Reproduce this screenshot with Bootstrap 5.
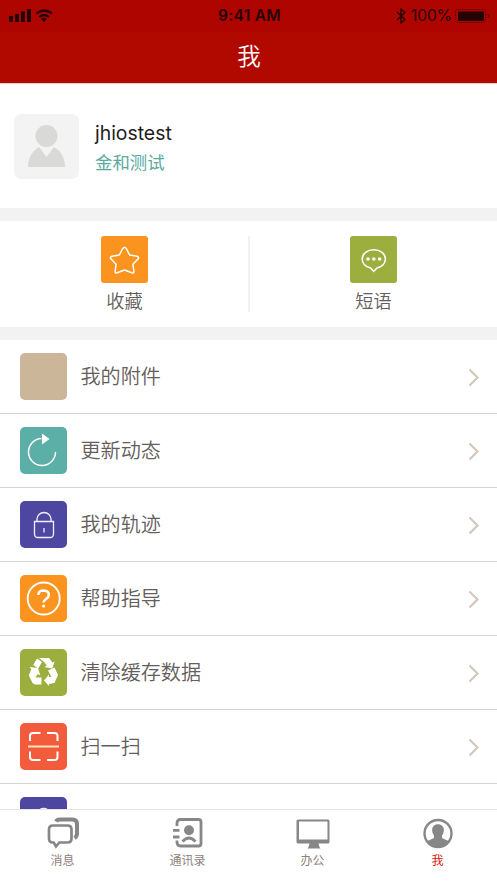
<!DOCTYPE html>
<html lang="zh-CN">
<head>
<meta charset="utf-8">
<meta name="viewport" content="width=device-width, initial-scale=1">
<title>我</title>
<link href="https://cdn.jsdelivr.net/npm/bootstrap@5.3.0/dist/css/bootstrap.min.css" rel="stylesheet">
<style>
  body { font-family: Inter, "Noto Sans CJK SC", sans-serif; color: #645d5b; background: #fff; }
  svg { display: block; flex: none; }
  .screen { height: 883px; }
  .top-bar { height: 83px; background: #b10800; color: #fff; box-shadow: 0 1px 0 #e2d0cd; }
  .status { height: 32px; background: #ae0500; color: #250303; font-size: 16px; line-height: 32px; padding: 0 7px 0 9px; }
  .status > div { flex: 1 1 0; }
  .clock { font-weight: 600; font-size: 15.5px; letter-spacing: .3px; }
  .charge { font-size: 15.5px; margin: 0 3px 0 4px; }
  .page-title { font-size: 23.5px; line-height: 49px; font-weight: 350; padding-left: 1px; }
  .profile { height: 125px; padding: 2px 0 0 14px; }
  .avatar { width: 65px; height: 65px; border-radius: 7px; background: #f3f3f3; }
  .user-info { padding-top: 4px; }
  .user-name { font-size: 19.4px; line-height: 28px; color: #221b1b; }
  .user-org { font-size: 17.4px; line-height: 31px; color: #58aaa0; }
  .band { height: 13px; background: #f2f2f2; }
  .shortcuts { height: 106px; padding: 15px 0 0 1px; }
  .shortcut-name { font-size: 18.2px; line-height: 36px; font-weight: 350; }
  .divider-v { width: 2px; height: 76px; background: #f1f1f1; flex: none; }
  .tile { width: 47px; height: 47px; border-radius: 5px; flex: none; }
  .shortcuts .tile { border-radius: 3px; }
  .orange { background: #fb931f; } .green { background: #9bae3e; } .tan { background: #ccb69a; }
  .teal { background: #5bafa7; } .violet { background: #4e47a2; } .red { background: #f25b3b; }
  .menu-item { height: 74px; padding: 0 17px 0 20px; border-bottom: 1px solid #d5d5d5; font-size: 20.1px; font-weight: 350; flex: none; }
  .menu-item .label { margin-left: 13.5px; padding-top: 2px; }
  .tab-bar { height: 74px; border-top: 1px solid #e6e6e6; background: #fff; font-size: 12px; color: #8c7f7a; flex: none; }
  .tab-bar .tab { padding-top: 7px; width: 125px; flex: none; }
  .tab-bar .tab span { line-height: 22px; }
  .tab-bar .current { color: #d61a08; }
</style>
<script src="https://cdn.jsdelivr.net/npm/bootstrap@5.3.0/dist/js/bootstrap.bundle.min.js"></script>
</head>
<body>
<svg width="0" height="0" class="position-absolute"><defs>
  <symbol id="chevron" viewBox="0 0 12 20"><path d="M1.500 2.500 9.500 10.500 1.500 18.500" fill="none" stroke="#d3c8bb" stroke-width="2.200"/></symbol>
</defs></svg>
<div class="screen d-flex flex-column overflow-hidden">
  <header class="top-bar flex-shrink-0">
    <div class="status d-flex align-items-center">
      <div class="d-flex align-items-center">
        <svg width="46" height="18" viewBox="0 0 46 18" fill="#250303"><path d="M0 9h4v6H0zM6 7h4v8H6zM12 4.500h4V15h-4zM18 2h4v13h-4z"/><g fill="none" stroke="#250303" stroke-width="2.200"><path d="M27.500 6.500Q35 .5 43 6.500M30.500 10Q35 6 40 10"/></g><path d="M32 12q3-2.500 6 0l-3 3z"/></svg>
      </div>
      <span class="clock">9:41 AM</span>
      <div class="d-flex align-items-center justify-content-end">
        <svg width="11" height="18" viewBox="0 0 11 18" fill="none" stroke="#250303" stroke-width="1.400"><path d="M1 5l8 7.500-4 3.500V2l4 3.500L1 13"/></svg>
        <span class="charge">100%</span>
        <svg width="35" height="15" viewBox="0 0 35 15"><rect x=".5" y=".5" width="30" height="13" rx="2" fill="none" stroke="#250303" stroke-dasharray="1 1" stroke-opacity=".65"/><path d="M3 2.500h26v9.500H3z" fill="#250303"/><path d="M32.500 5l2 2-2 2" fill="none" stroke="#250303"/></svg>
      </div>
    </div>
    <div class="page-title text-center">我</div>
  </header>

  <section class="profile d-flex align-items-center flex-shrink-0">
    <div class="avatar"><svg width="65" height="65" viewBox="0 0 65 65" fill="#d9d9d8"><circle cx="32.500" cy="22" r="11"/><path d="M14 53c0-8 3-15 11-20l7.500 10L40 33c7 4 11 11 11 20z"/></svg></div>
    <div class="ms-3 user-info"><div class="user-name">jhiostest</div><div class="user-org">金和测试</div></div>
  </section>
  <div class="band flex-shrink-0"></div>

  <section class="shortcuts d-flex flex-shrink-0">
    <div class="flex-fill w-50 d-flex flex-column align-items-center">
      <div class="tile orange"><svg width="47" height="47" viewBox="0 0 47 47" fill="none" stroke="#fff" stroke-width="1.500" stroke-linejoin="round"><path d="M21.700 12.700q1.800-3 3.600 0l3.400 6.300 7.300 1.300q2.600.8.900 2.700l-5 5.200 1 7.300q0 2-2 1.300L23.500 34l-7.400 2.800q-2 .7-2-1.300l1-7.300-5-5.200q-1.700-1.900.9-2.700l7.300-1.300z"/></svg></div>
      <div class="shortcut-name">收藏</div>
    </div>
    <div class="divider-v"></div>
    <div class="flex-fill w-50 d-flex flex-column align-items-center">
      <div class="tile green"><svg width="47" height="47" viewBox="0 0 47 47"><path d="M20.500 32c-5-1.200-8.300-4.800-8.300-9 0-5.300 5.200-9.200 11.600-9.200S35.400 17.700 35.400 23c0 4.200-3.400 7.800-8.400 9l-3.200 3.300z" fill="none" stroke="#fff" stroke-width="1.600"/><g fill="#fff"><circle cx="18" cy="23" r="1.800"/><circle cx="23.800" cy="23" r="1.800"/><circle cx="29.600" cy="23" r="1.800"/></g></svg></div>
      <div class="shortcut-name">短语</div>
    </div>
  </section>
  <div class="band flex-shrink-0"></div>

  <main class="flex-fill overflow-hidden d-flex flex-column">
    <div class="menu-item d-flex align-items-center">
      <div class="tile tan"><svg width="47" height="47" viewBox="0 0 47 47" fill="#f0ae70"><path d="M18 5h1v1h-1zM28 7h1v1h-1zM34 7h1v1h-1zM21 11h1v1h-1zM28 17h1v1h-1zM40 15h1v1h-1zM16 21h1v1h-1zM34 21h1v1h-1zM22 25h1v1h-1zM12 31h1v1h-1zM28 30h1v1h-1zM18 35h1v1h-1zM36 32h1v1h-1zM6 40h1v1H6zM22 40h1v1h-1zM32 39h1v1h-1z"/></svg></div>
      <span class="label flex-fill">我的附件</span><svg width="12" height="20"><use href="#chevron"/></svg>
    </div>
    <div class="menu-item d-flex align-items-center">
      <div class="tile teal"><svg width="47" height="47" viewBox="0 0 47 47"><path d="M21.500 11.500A13.500 13.500 0 1 0 35.500 25" fill="none" stroke="#fff" stroke-width="1.500"/><path d="M22 6.500v11l7.500-5.500z" fill="#fff"/></svg></div>
      <span class="label flex-fill">更新动态</span><svg width="12" height="20"><use href="#chevron"/></svg>
    </div>
    <div class="menu-item d-flex align-items-center">
      <div class="tile violet"><svg width="47" height="47" viewBox="0 0 47 47" fill="none" stroke="#f1efff" stroke-width="1.300"><path d="M14.500 20.500h19V33q0 3.500-3.500 3.500H18q-3.500 0-3.500-3.500zM17 20.500v-2.500a7 6.500 0 0 1 14 0v2.500M24 27v4.500"/></svg></div>
      <span class="label flex-fill">我的轨迹</span><svg width="12" height="20"><use href="#chevron"/></svg>
    </div>
    <div class="menu-item d-flex align-items-center">
      <div class="tile orange"><svg width="47" height="47" viewBox="0 0 47 47"><circle cx="23.700" cy="23.500" r="16" fill="none" stroke="#fff" stroke-width="1.900"/><path d="M18.300 20q.2-4.500 5.300-4.500 5.200.2 5.200 4.500c0 4-5.200 4-5.200 7.500" fill="none" stroke="#fff" stroke-width="2.600"/><circle cx="23.600" cy="31" r="1.600" fill="#fff"/></svg></div>
      <span class="label flex-fill">帮助指导</span><svg width="12" height="20"><use href="#chevron"/></svg>
    </div>
    <div class="menu-item d-flex align-items-center">
      <div class="tile green"><svg width="47" height="47" viewBox="0 0 47 47" fill="#fff"><path d="M19 9h10l3.500 4.500 2.200-1-2.500 7-8-1.500 2.700-1.200-3-4zM17 9.500l5 3.500-3.800 6.500-5-3.500zM9.500 18l8.500 1 2.300 7.500-2.500-1.500-2.300 3.500h6v7h-6.500l-2.500-1.500-3.700-7.500 2.500-6.500zM34.500 18.500l3.500 7.500-3.500 8-5.500 1v2l-5-5.500 5-6v2.500h2.500l-3.500-6.500z"/></svg></div>
      <span class="label flex-fill">清除缓存数据</span><svg width="12" height="20"><use href="#chevron"/></svg>
    </div>
    <div class="menu-item d-flex align-items-center">
      <div class="tile red"><svg width="47" height="47" viewBox="0 0 47 47" fill="none" stroke="#fff" stroke-width="2"><path d="M10 18v-5q0-3 3-3h7.500M27 10h7.500q3 0 3 3v5M10 28.500v5.500q0 3 3 3h7.500M27 37h7.500q3 0 3-3v-5.500"/><path d="M8 23.500h31" stroke="#ffe2c0"/></svg></div>
      <span class="label flex-fill">扫一扫</span><svg width="12" height="20"><use href="#chevron"/></svg>
    </div>
    <div class="menu-item d-flex align-items-center">
      <div class="tile violet"><svg width="47" height="47" viewBox="0 0 47 47" fill="none" stroke="#f1efff" stroke-width="1.500"><circle cx="23.700" cy="18" r="6.500"/></svg></div>
    </div>
  </main>

  <nav class="tab-bar d-flex overflow-hidden">
    <div class="tab d-flex flex-column align-items-center">
      <svg width="34" height="33" viewBox="0 0 34 33"><path d="M10 4.500q1-2 4-2h12.500q4.500 0 4.500 4.500v9.500q0 3-2.500 4.500" fill="none" stroke="#878787" stroke-width="4"/><path d="M7 8.500h14.500q4 0 4 4v9q0 4-4 4h-8.200l-3.300 4-2.300-4H7q-4 0-4-4v-9q0-4 4-4z" fill="#fff" stroke="#878787" stroke-width="2.700"/></svg>
      <span>消息</span>
    </div>
    <div class="tab d-flex flex-column align-items-center">
      <svg width="32" height="33" viewBox="0 0 32 33" fill="none" stroke="#878787" stroke-width="2.800"><path d="M5 9V6q0-3.500 3.500-3.500h18q2.500 0 2.500 2.500v21.500q0 2.500-2.500 2.500H8.500Q5 29 5 25v-1.500M1 13.300h6.500M1 20h6.500"/><circle cx="17" cy="13.300" r="5" fill="#878787" stroke="none"/><path d="M10.500 24.500q6.500-7 13 0"/></svg>
      <span>通讯录</span>
    </div>
    <div class="tab d-flex flex-column align-items-center">
      <svg width="34" height="33" viewBox="0 0 34 33" fill="#878787"><path fill-rule="evenodd" d="M2 2.500h30q1.500 0 1.500 1.500v21q0 1.500-1.500 1.500H22.500l1 3.500 1 1.500H11.500l1-1.500 1-3.500H2Q.5 26.500.5 25V4q0-1.500 1.500-1.500zM3 4.500v18h28.500v-18z"/></svg>
      <span>办公</span>
    </div>
    <div class="tab d-flex flex-column align-items-center current">
      <svg width="32" height="33" viewBox="0 0 32 33"><circle cx="16" cy="16.500" r="13.500" fill="none" stroke="#878787" stroke-width="2.400"/><path d="M4.500 24.500l7.500-3.500v-2.500c-1.500-2-2-4-1.800-6.500.5-6.500 11-6.500 11.600 0 .2 2.500-.3 4.500-1.800 6.500V21l7.500 3.500C22 32 10 32 4.500 24.500z" fill="#878787"/></svg>
      <span>我</span>
    </div>
  </nav>
</div>
</body>
</html>
